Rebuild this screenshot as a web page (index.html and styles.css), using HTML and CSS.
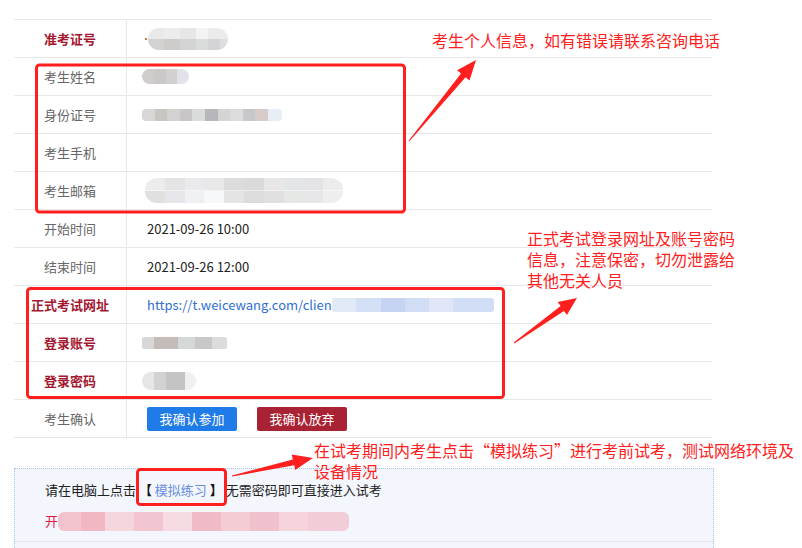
FILE: index.html
```html
<!DOCTYPE html>
<html lang="zh-CN">
<head>
<meta charset="utf-8">
<title>考试信息</title>
<link rel="stylesheet" href="styles.css">
</head>
<body>
<div class="page">
  <div class="table">
    <div class="row"><div class="label strong">准考证号</div><div class="value"><span class="dot"></span><span class="blur b-ticket"></span></div></div>
    <div class="row"><div class="label">考生姓名</div><div class="value"><span class="blur b-name"></span></div></div>
    <div class="row"><div class="label">身份证号</div><div class="value"><span class="blur b-id"></span></div></div>
    <div class="row"><div class="label">考生手机</div><div class="value"></div></div>
    <div class="row"><div class="label">考生邮箱</div><div class="value"><span class="blur b-mail"></span></div></div>
    <div class="row"><div class="label">开始时间</div><div class="value text">2021-09-26 10:00</div></div>
    <div class="row"><div class="label">结束时间</div><div class="value text">2021-09-26 12:00</div></div>
    <div class="row"><div class="label strong">正式考试网址</div><div class="value text"><span class="link">https://t.weicewang.com/clien</span><span class="blur b-url"></span></div></div>
    <div class="row"><div class="label strong">登录账号</div><div class="value"><span class="blur b-acc"></span></div></div>
    <div class="row"><div class="label strong">登录密码</div><div class="value"><span class="blur b-pwd"></span></div></div>
    <div class="row"><div class="label">考生确认</div><div class="value text btns"><span class="btn btn-blue">我确认参加</span><span class="btn btn-red">我确认放弃</span></div></div>
  </div>

  <div class="notice">
    <p class="line1">请在电脑上点击 <b class="br">【</b> <span class="mock">模拟练习</span> <b class="br">】</b> 无需密码即可直接进入试考</p>
    <p class="line2"><span class="kai">开</span><span class="blur b-pink"></span></p>
    <div class="divider"></div>
  </div>
</div>

<svg class="marks" width="802" height="548" viewBox="0 0 802 548">
  <g fill="none" stroke="#ff1f1f" stroke-width="3">
    <rect x="36.5" y="65" width="368" height="147" rx="3"/>
    <rect x="27.5" y="288.5" width="476" height="109" rx="3"/>
    <rect x="137.5" y="469.5" width="88" height="35" rx="3"/>
  </g>
  <g fill="#ff1f1f">
    <polygon points="408.6,140.7 461.0,73.5 457.1,70.3 476,60 469.5,80.5 465.6,77.3 409.4,141.3"/>
    <polygon points="513.7,342.6 560.6,306.1 557.7,302.0 577,298 566.9,315.0 564.0,311.0 514.3,343.4"/>
    <polygon points="231.9,475.5 292.8,459.4 291.8,454.5 313,458 295.2,470.1 294.2,465.2 232.1,476.5"/>
  </g>
</svg>

<div class="note note1">考生个人信息，如有错误请联系咨询电话</div>
<div class="note note2">正式考试登录网址及账号密码<br>信息，注意保密，切勿泄露给<br>其他无关人员</div>
<div class="note note3">在试考期间内考生点击“模拟练习”进行考前试考，测试网络环境及<br>设备情况</div>
</body>
</html>
```

FILE: styles.css
```css
html, body {
  margin: 0;
  padding: 0;
  background: #ffffff;
}
body {
  width: 802px;
  height: 548px;
  overflow: hidden;
  position: relative;
  font-family: "Noto Sans CJK SC", "Noto Sans", "DejaVu Sans", sans-serif;
  font-size: 13px;
  color: #222;
}
.page {
  padding: 19px 0 0 14px;
  width: 698px;
}
.table {
  border-bottom: 1px solid #e8e8e8;
}
.row {
  display: grid;
  grid-template-columns: 113px 1fr;
  height: 38px;
  box-sizing: border-box;
  border-top: 1px solid #e8e8e8;
}
.label {
  border-right: 1px solid #e8e8e8;
  display: flex;
  align-items: center;
  justify-content: center;
  color: #666;
  font-size: 13px;
}
.label.strong {
  color: #a3182f;
  font-weight: 700;
}
.value {
  display: flex;
  align-items: center;
  padding-left: 15px;
}
.value.text {
  padding-left: 20px;
}
.link {
  color: #2f6fd2;
}
.btns {
  gap: 20px;
}
.btn {
  display: inline-flex;
  align-items: center;
  justify-content: center;
  width: 90px;
  height: 24px;
  border-radius: 2px;
  color: #fff;
  font-size: 13px;
}
.btn-blue { background: #1f7be8; }
.btn-red { background: #a92234; }

.dot {
  width: 2px;
  height: 2px;
  background: #c87a3a;
  margin-right: 1px;
  margin-left: 3px;
}
.blur {
  display: inline-block;
  border-radius: 9px;
}
.b-ticket {
  width: 80px;
  height: 22px;
  border-radius: 11px;
  background:
    linear-gradient(90deg, #e9e9e9 0 20%, #ececec 20% 40%, #e6e6e6 40% 60%, #f3f3f1 60% 75%, #ebebeb 75% 100%) top / 100% 50% no-repeat,
    linear-gradient(90deg, #d2d2d0 0 20%, #cdccca 20% 40%, #d4d4d4 40% 60%, #dadcdc 60% 75%, #d4d4d6 75% 90%, #dedede 90% 100%) bottom / 100% 50% no-repeat;
}
.b-name {
  width: 47px;
  height: 15px;
  border-radius: 8px;
  background: linear-gradient(90deg, #d0cccc 0 25%, #cbc8c8 25% 50%, #d2d0d0 50% 75%, #e2e2e8 75% 100%);
}
.b-id {
  width: 140px;
  height: 12px;
  border-radius: 4px;
  background: linear-gradient(90deg, #d8d6d6 0 9%, #c9c6c2 9% 18%, #d4d2d0 18% 27%, #c8c6c6 27% 36%, #d8dcda 36% 45%, #b8b6ba 45% 54%, #d4d4d4 54% 63%, #dcdcdc 63% 72%, #c8c8cc 72% 81%, #d8ccc8 81% 90%, #e8eef6 90% 100%);
}
.b-mail {
  width: 198px;
  height: 25px;
  border-radius: 12px;
  margin-left: 3px;
  background:
    linear-gradient(90deg, #ececec 0 10%, #e4e4e4 10% 20%, #eaeaee 20% 30%, #e8e8e8 30% 40%, #dcdcdc 40% 50%, #d8dadc 50% 60%, #e8e6e6 60% 70%, #e2e6e8 70% 80%, #e4e4e6 80% 90%, #ececec 90% 100%) top / 100% 50% no-repeat,
    linear-gradient(90deg, #e0e0e0 0 10%, #e6e6ea 10% 20%, #eef0f4 20% 30%, #f6f8fa 30% 40%, #e4e4e4 40% 50%, #dddcdc 50% 60%, #e0e0e0 60% 70%, #e6e8e6 70% 80%, #e6e6e8 80% 90%, #eeeeee 90% 100%) bottom / 100% 50% no-repeat;
}
.b-url {
  width: 162px;
  height: 14px;
  border-radius: 3px;
  background: linear-gradient(90deg, #e2eaf8 0 15%, #d4e0f6 15% 30%, #c4d4f2 30% 45%, #d0ddf5 45% 60%, #e0e6f8 60% 75%, #d2def5 75% 100%);
}
.b-acc {
  width: 85px;
  height: 12px;
  border-radius: 2px;
  background: linear-gradient(90deg, #d8d6d6 0 14%, #c4bcb8 14% 42%, #d4d8d6 42% 62%, #c8c8c8 62% 82%, #dcdcdc 82% 100%);
}
.b-pwd {
  width: 54px;
  height: 18px;
  border-radius: 9px;
  background: linear-gradient(90deg, #e6e6e6 0 22%, #d2d2d2 22% 45%, #c4c4c4 45% 80%, #f0f0f0 80% 100%);
}
.b-pink {
  width: 291px;
  height: 19px;
  border-radius: 6px;
  vertical-align: middle;
  background: linear-gradient(90deg, #f3c2cc 0 8%, #f1b8c4 8% 16%, #f6d6dd 16% 26%, #f2c6d0 26% 36%, #f6dce2 36% 46%, #f0bac6 46% 56%, #f4ccd4 56% 66%, #f0c0cc 66% 76%, #f6d4dc 76% 86%, #f2ccd6 86% 100%);
}

.notice {
  margin-top: 30px;
  width: 698px;
  border: 1px dotted #a9c7ec;
  border-bottom: none;
  background: #f3f7fd;
  padding: 0;
}
.notice p {
  margin: 0;
  padding-left: 30px;
  line-height: 20px;
  height: 20px;
}
.line1 {
  padding-top: 11px;
  white-space: pre;
}
.line1 .br {
  font-weight: 700;
  color: #111;
}
.mock {
  color: #6a8fe0;
}
.line2 {
  padding-top: 11px;
  padding-bottom: 10px;
  display: flex;
  align-items: center;
}
.kai {
  color: #e5133d;
}
.divider {
  border-top: 1px solid #e4e6ea;
  height: 10px;
}

.marks {
  position: absolute;
  left: 0;
  top: 0;
  pointer-events: none;
}
.note {
  position: absolute;
  color: #ff2020;
  font-size: 16px;
  line-height: 21px;
  white-space: nowrap;
}
.note1 { left: 432px; top: 30px; }
.note2 { left: 527px; top: 228px; }
.note3 { left: 314px; top: 440px; }
```
